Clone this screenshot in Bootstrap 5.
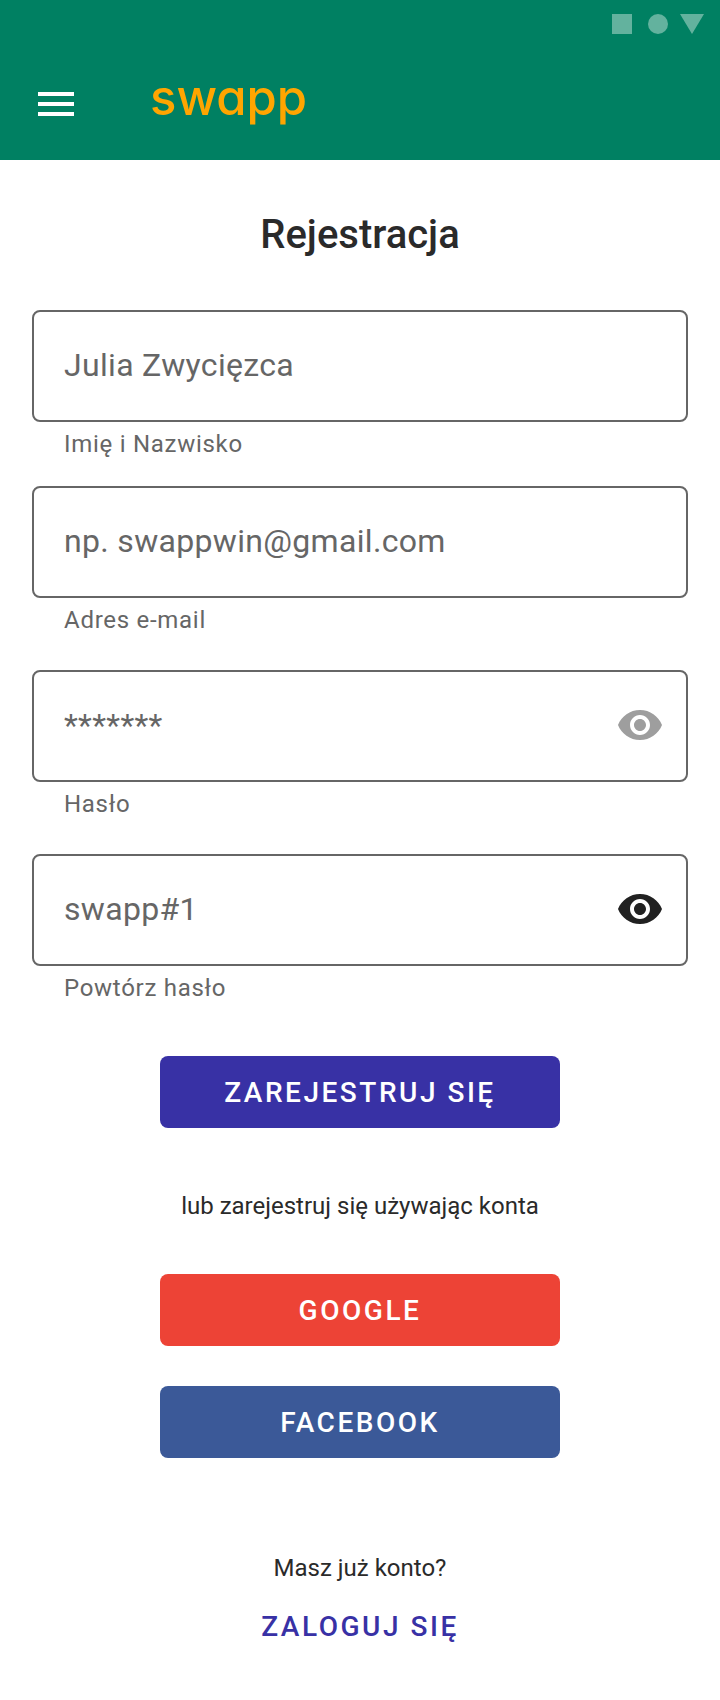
<!DOCTYPE html>
<html lang="pl">
<head>
<meta charset="utf-8">
<meta name="viewport" content="width=device-width, initial-scale=1">
<title>swapp – Rejestracja</title>
<link href="https://cdn.jsdelivr.net/npm/bootstrap@5.3.0/dist/css/bootstrap.min.css" rel="stylesheet">
<style>
  body { font-family: Roboto, "Liberation Sans", sans-serif; color: #2a2a2a; background: #fff; }
  .app-header { background: #008062; }
  .status-row { height: 48px; padding: 14px 16px 0 0; }
  .app-bar { height: 112px; padding: 0 32px; gap: 70px; }
  .menu-btn { padding: 6px; line-height: 0; }
  .brand { font: 500 49px/64px Inter, sans-serif; font-feature-settings: "cv11"; color: #ffa500; padding-bottom: 12px; }
  .brand:hover { color: #ffa500; }
  .page { padding: 51px 32px 54px; }
  .page-title { font-size: 40px; line-height: 48px; font-weight: 500; margin-bottom: 51px; }
  .field { margin-bottom: 34px; }
  .field-first { margin-bottom: 26px; }
  .field-box { height: 112px; border: 2px solid #666; border-radius: 8px; padding: 0 22px 2px 30px; }
  .field-box input { font-size: 32px; line-height: 40px; letter-spacing: .01em; color: #666; padding: 0; border: 0; background: none; }
  .field-box input::placeholder { color: #666; opacity: 1; }
  .field-box input:focus { box-shadow: none; color: #666; background: none; }
  .field-box:focus-within { border-color: #3730a3; }
  .field label { font-size: 24px; line-height: 32px; letter-spacing: .03em; color: #666; margin: 6px 32px 0; }
  .eye { line-height: 0; color: #212121; }
  .eye-muted { color: #9e9e9e; }
  .actions { max-width: 400px; }
  .wide-btn { height: 72px; border: 0; border-radius: 8px; color: #fff; padding: 8px 12px 6px; }
  .wide-btn:hover { color: #fff; }
  .caps { font-size: 28px; line-height: 40px; font-weight: 500; letter-spacing: .09em; }
  .btn-register { background: #3831a5; margin-top: 52px; }
  .btn-google { background: #ed4336; margin-bottom: 40px; }
  .btn-facebook { background: #3b5998; }
  .note { font-size: 24px; line-height: 32px; }
  .note-or { margin: 62px 0 52px; }
  .note-login { margin: 94px 0 23px; }
  .login-link { color: #3831a5; }
</style>
</head>
<body>
<header class="app-header">
  <div class="status-row d-flex justify-content-end">
    <svg width="92" height="20" viewBox="0 0 92 20" fill="#63b29e" aria-hidden="true">
      <path d="M0 0h20v20H0z"/><circle cx="46" cy="10" r="10"/><path d="M68 0h24L80 20z"/>
    </svg>
  </div>
  <nav class="app-bar d-flex align-items-center" aria-label="Główna">
    <button type="button" class="menu-btn btn border-0 rounded-0" aria-label="Menu">
      <svg width="36" height="24" viewBox="0 0 36 24" fill="#fff"><path d="M0 0h36v4H0zM0 10h36v4H0zM0 20h36v4H0z"/></svg>
    </button>
    <a class="brand text-decoration-none" href="#">swapp</a>
  </nav>
</header>

<main class="page">
  <h1 class="page-title text-center">Rejestracja</h1>
  <form>
    <div class="field field-first">
      <div class="field-box d-flex align-items-center">
        <input class="form-control" type="text" id="name" placeholder="Julia Zwycięzca">
      </div>
      <label class="d-block" for="name">Imię i Nazwisko</label>
    </div>
    <div class="field">
      <div class="field-box d-flex align-items-center">
        <input class="form-control" type="email" id="email" placeholder="np. swappwin@gmail.com">
      </div>
      <label class="d-block" for="email">Adres e-mail</label>
    </div>
    <div class="field">
      <div class="field-box d-flex align-items-center">
        <input class="form-control" type="password" id="password" placeholder="*******">
        <button type="button" class="eye eye-muted btn p-0 border-0" aria-label="Pokaż hasło">
          <svg width="48" height="48" viewBox="0 0 24 24" fill="currentColor"><path d="M12 4.5C7 4.5 2.73 7.61 1 12c1.73 4.39 6 7.5 11 7.5s9.27-3.11 11-7.5c-1.73-4.39-6-7.5-11-7.5zM12 17c-2.76 0-5-2.24-5-5s2.24-5 5-5 5 2.24 5 5-2.24 5-5 5zm0-8c-1.66 0-3 1.34-3 3s1.34 3 3 3 3-1.34 3-3-1.34-3-3-3z"/></svg>
        </button>
      </div>
      <label class="d-block" for="password">Hasło</label>
    </div>
    <div class="field mb-0">
      <div class="field-box d-flex align-items-center">
        <input class="form-control" type="text" id="repeat" value="swapp#1">
        <button type="button" class="eye btn p-0 border-0" aria-label="Ukryj hasło">
          <svg width="48" height="48" viewBox="0 0 24 24" fill="currentColor"><path d="M12 4.5C7 4.5 2.73 7.61 1 12c1.73 4.39 6 7.5 11 7.5s9.27-3.11 11-7.5c-1.73-4.39-6-7.5-11-7.5zM12 17c-2.76 0-5-2.24-5-5s2.24-5 5-5 5 2.24 5 5-2.24 5-5 5zm0-8c-1.66 0-3 1.34-3 3s1.34 3 3 3 3-1.34 3-3-1.34-3-3-3z"/></svg>
        </button>
      </div>
      <label class="d-block" for="repeat">Powtórz hasło</label>
    </div>
    <div class="actions mx-auto d-flex flex-column text-center">
      <button type="submit" class="btn wide-btn caps btn-register">ZAREJESTRUJ SIĘ</button>
      <p class="note note-or">lub zarejestruj się używając konta</p>
      <button type="button" class="btn wide-btn caps btn-google">GOOGLE</button>
      <button type="button" class="btn wide-btn caps btn-facebook">FACEBOOK</button>
      <p class="note note-login">Masz już konto?</p>
      <a class="login-link caps text-decoration-none" href="#">ZALOGUJ SIĘ</a>
    </div>
  </form>
</main>
<script src="https://cdn.jsdelivr.net/npm/bootstrap@5.3.0/dist/js/bootstrap.bundle.min.js"></script>
</body>
</html>
